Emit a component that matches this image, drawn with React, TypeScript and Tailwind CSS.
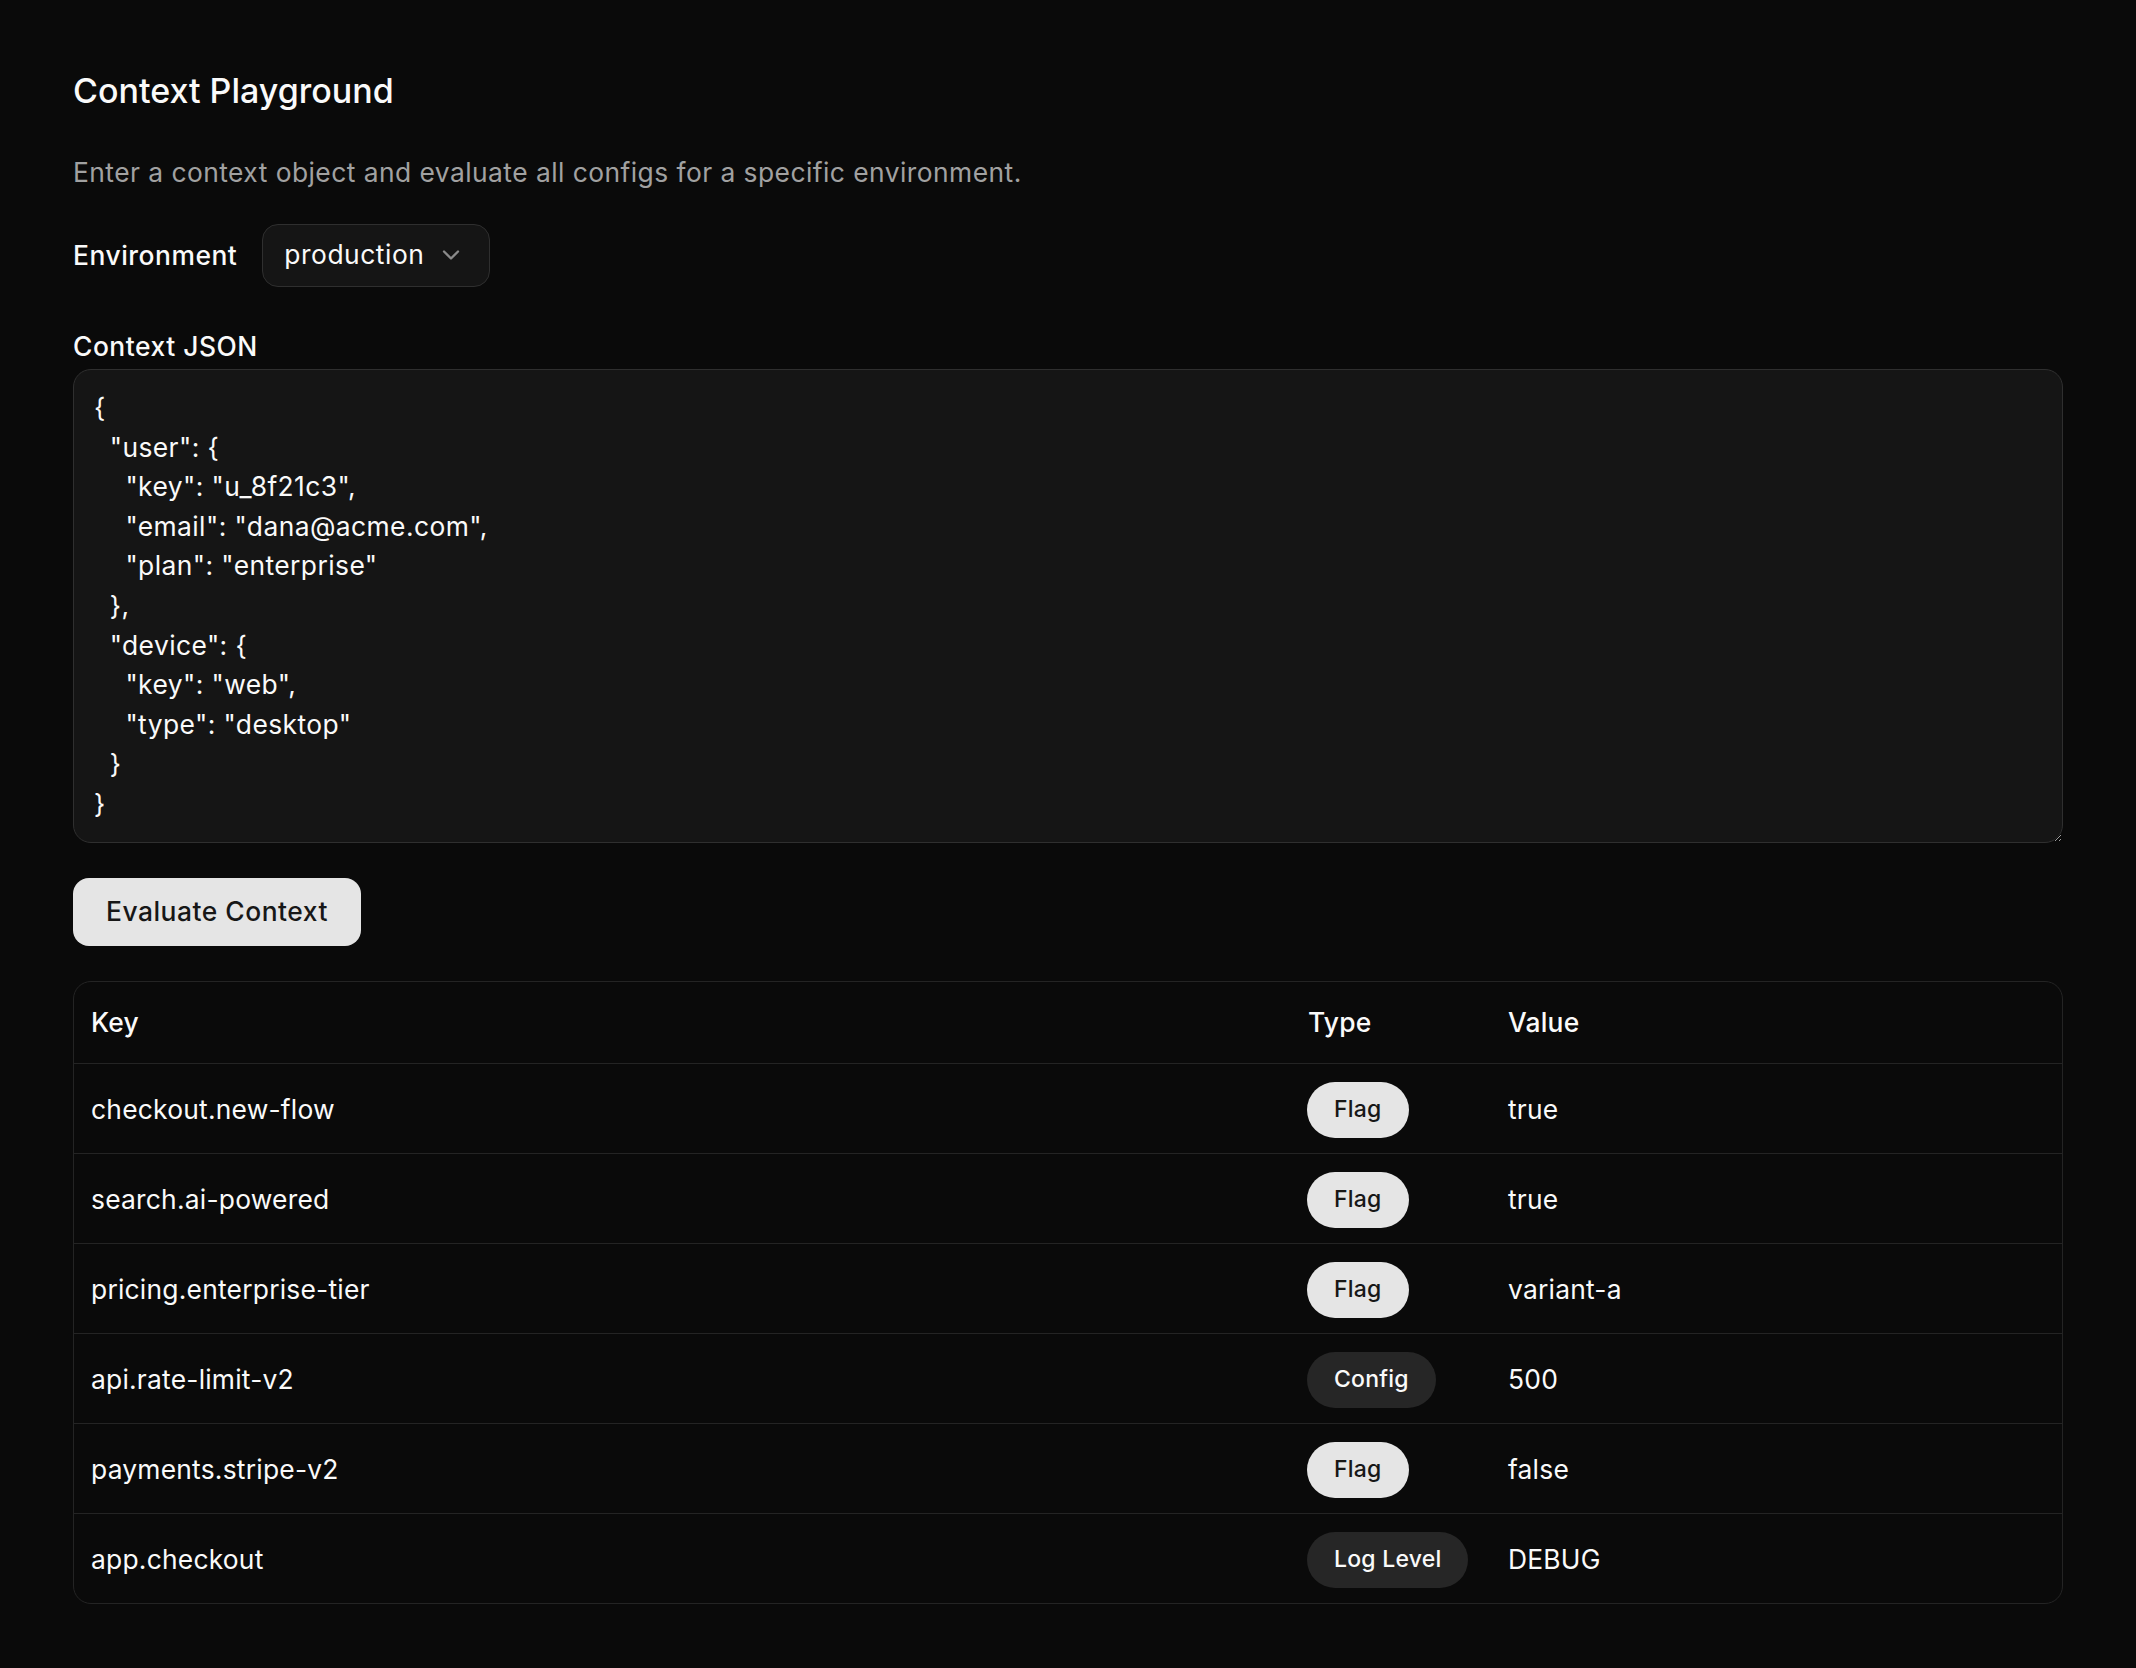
import { ChevronDown } from 'lucide-react'

const json = `{
  "user": {
    "key": "u_8f21c3",
    "email": "dana@acme.com",
    "plan": "enterprise"
  },
  "device": {
    "key": "web",
    "type": "desktop"
  }
}`

type Row = {
  key: string
  type: 'Flag' | 'Config' | 'Log Level'
  value: string
}

const rows: Row[] = [
  { key: 'checkout.new-flow', type: 'Flag', value: 'true' },
  { key: 'search.ai-powered', type: 'Flag', value: 'true' },
  { key: 'pricing.enterprise-tier', type: 'Flag', value: 'variant-a' },
  { key: 'api.rate-limit-v2', type: 'Config', value: '500' },
  { key: 'payments.stripe-v2', type: 'Flag', value: 'false' },
  { key: 'app.checkout', type: 'Log Level', value: 'DEBUG' },
]

function TypeBadge({ type }: { type: Row['type'] }) {
  const flag = type === 'Flag'
  return (
    <span
      className={
        flag
          ? 'inline-flex h-[56px] items-center rounded-full bg-[#e5e5e5] px-[27px] text-[23px] font-medium text-[#171717]'
          : 'inline-flex h-[56px] items-center rounded-full bg-[#262626] px-[27px] text-[23px] font-medium text-[#fafafa]'
      }
    >
      {type}
    </span>
  )
}

export default function App() {
  return (
    <div className="min-h-screen bg-[#0a0a0a] px-[73px] pt-[68px] pb-[64px] font-['Inter',sans-serif] tracking-[0.014em] text-[#fafafa]">
      <h1 className="text-[34px] leading-[46px] font-medium tracking-normal">
        Context Playground
      </h1>
      <p className="mt-[39px] text-[26.4px] leading-[39.6px] tracking-[0.017em] text-[#a1a1a1]">
        Enter a context object and evaluate all configs for a specific
        environment.
      </p>

      <div className="mt-[31px] flex items-center gap-[25px]">
        <span className="text-[26.4px] leading-none font-medium tracking-[0.02em]">
          Environment
        </span>
        <button className="flex h-[63px] items-center gap-[13px] rounded-[16px] border-[1.6px] border-[#2f2f2f] bg-[#151515] pr-[24px] pl-[21px] text-[26.4px] tracking-[0.02em] text-[#fafafa]">
          production
          <ChevronDown size={28} strokeWidth={2} className="text-[#8a8a8a]" />
        </button>
      </div>

      <div className="mt-[46px] flex flex-col gap-[10px]">
        <label className="text-[26.4px] leading-none font-medium tracking-[0.02em]">
          Context JSON
        </label>
        <textarea
          defaultValue={json}
          spellCheck={false}
          className="h-[474px] w-full resize-y rounded-[18px] border-[1.6px] border-[#2f2f2f] bg-[#151515] px-[20px] py-[18px] font-['Inter',sans-serif] text-[26.4px] leading-[39.6px] tracking-[0.016em] text-[#fafafa] outline-none"
        />
      </div>

      <button className="mt-[35px] flex h-[68px] w-[288px] items-center justify-center rounded-[16px] bg-[#e5e5e5] text-[26.4px] font-medium tracking-[0.02em] text-[#171717]">
        Evaluate Context
      </button>

      <div className="mt-[35px] overflow-hidden rounded-[18px] border-[1.6px] border-[#242424]">
        <div className="grid h-[82px] grid-cols-[1fr_200px_571px] items-center border-b-[1.6px] border-[#242424] text-[26.4px] font-medium">
          <div className="pl-[17px]">Key</div>
          <div className="pl-[17px]">Type</div>
          <div className="pl-[17px]">Value</div>
        </div>
        {rows.map((row, i) => (
          <div
            key={row.key}
            className={
              i === rows.length - 1
                ? 'grid h-[89px] grid-cols-[1fr_200px_571px] items-center pt-[2px] text-[26.4px]'
                : 'grid h-[90px] grid-cols-[1fr_200px_571px] items-center border-b-[1.6px] border-[#242424] pt-[2px] text-[26.4px]'
            }
          >
            <div className="pl-[17px]">{row.key}</div>
            <div className="pl-[16px]">
              <TypeBadge type={row.type} />
            </div>
            <div className="pl-[17px]">{row.value}</div>
          </div>
        ))}
      </div>
    </div>
  )
}
